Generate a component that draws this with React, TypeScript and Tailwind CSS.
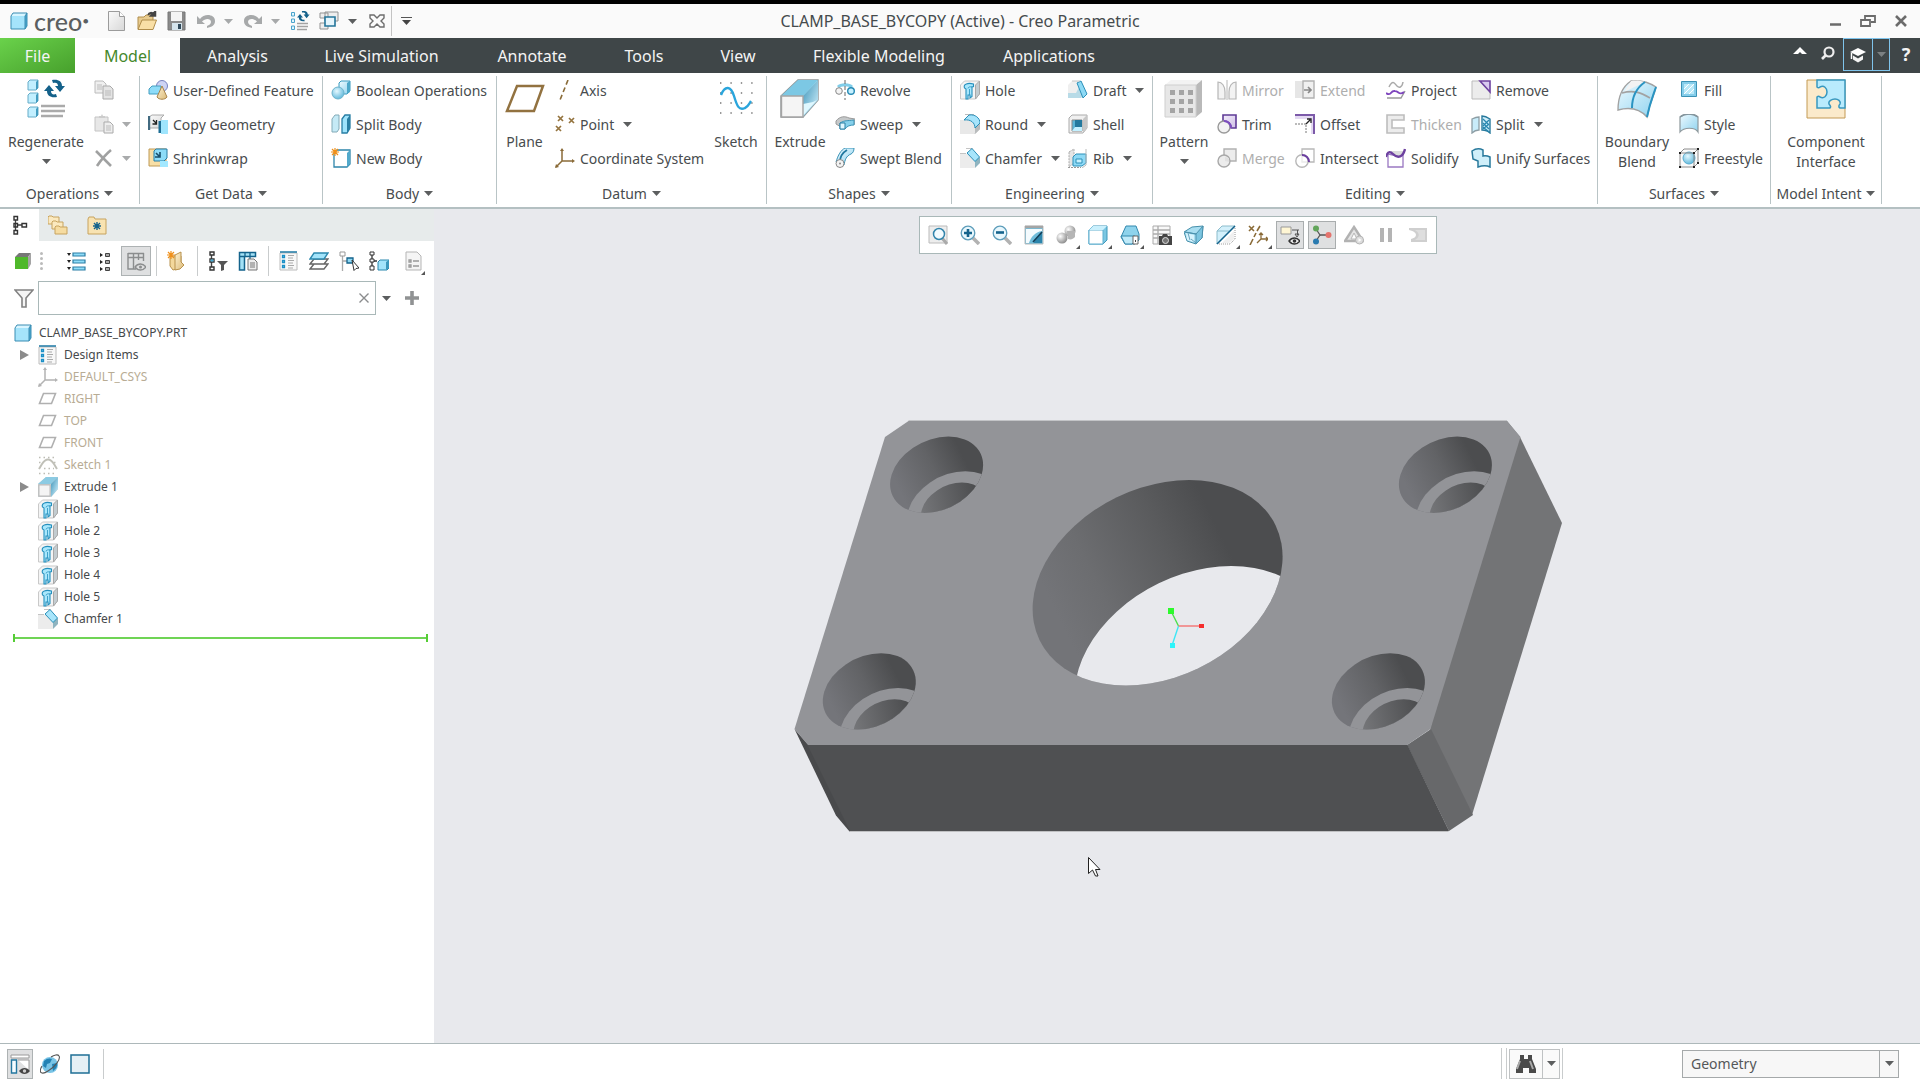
import type { ReactNode } from "react";
import { clsx } from "clsx";

interface IconProps {
    children: ReactNode;
    size?: 18 | 20 | 40;
}

function Ico({ children, size = 20 }: IconProps) {
    return (
        <svg
            viewBox={`0 0 ${size} ${size}`}
            width={size}
            height={size}
            fill="none"
            className="shrink-0"
            aria-hidden="true"
        >
            {children}
        </svg>
    );
}

function Caret({ className = "text-[#5c5e5f]" }: { className?: string }) {
    return (
        <svg viewBox="0 0 9 5" width="9" height="5" className={clsx("shrink-0", className)} aria-hidden="true">
            <path d="M0 0h9L4.500 5z" fill="currentColor" />
        </svg>
    );
}

// shared paints for all icons
function Paints() {
    return (
        <svg width="0" height="0" className="absolute" aria-hidden="true">
            <defs>
                <linearGradient id="sky" x1="0" y1="0" x2="1" y2="1">
                    <stop offset="0" stopColor="#eefaff" />
                    <stop offset="1" stopColor="#8fd3ef" />
                </linearGradient>
                <linearGradient id="sea" x1="0" y1="0" x2="1" y2="1">
                    <stop offset="0" stopColor="#3b93b8" />
                    <stop offset="1" stopColor="#d8f4ff" />
                </linearGradient>
                <linearGradient id="ash" x1="0" y1="0" x2="1" y2="1">
                    <stop offset="0" stopColor="#fafafa" />
                    <stop offset="1" stopColor="#d8d8d8" />
                </linearGradient>
                <linearGradient id="sand" x1="0" y1="0" x2="1" y2="1">
                    <stop offset="0" stopColor="#fdf0d0" />
                    <stop offset="1" stopColor="#dcbb79" />
                </linearGradient>
                <linearGradient id="lilac" x1="0" y1="0" x2="1" y2="1">
                    <stop offset="0" stopColor="#f3ecfb" />
                    <stop offset="1" stopColor="#cfc0e6" />
                </linearGradient>
                <radialGradient id="ball" cx="0.35" cy="0.35" r="0.7">
                    <stop offset="0" stopColor="#ffffff" />
                    <stop offset="1" stopColor="#8a8a8a" />
                </radialGradient>
                <radialGradient id="bluball" cx="0.4" cy="0.35" r="0.7">
                    <stop offset="0" stopColor="#e4f8ff" />
                    <stop offset="1" stopColor="#5bb6da" />
                </radialGradient>
            </defs>
        </svg>
    );
}

const SPARK = "M4 0v8M0 4h8M1 1l6 6M7 1L1 7";

function Part() {
    return (
        <Ico size={18}>
            <path d="M1 4l2-3h14l-2 3z" fill="#d9f5ff" />
            <path d="M15 4l2-3v13l-2 3z" fill="#4ba7cd" />
            <path d="M1 4h14v13H1z" fill="#a5e4fb" />
            <path d="M1 4l2-3h14v13l-2 3H1zM15 4v13M15 4l2-3" stroke="#3a8db3" />
        </Ico>
    );
}

function Refresh({ x = 0, y = 0, s = 1 }: { x?: number; y?: number; s?: number }) {
    return (
        <g transform={`translate(${x} ${y}) scale(${s})`} fill="#14618a">
            <path d="M8 0l1 3c3-1 5 0 5 3h-3l5 6 5-6h-3c0-5-4-7-10-6z" />
            <path d="M13 17l-1-3c-3 1-5 0-5-3h3L5 5l-5 6h3c0 5 4 7 10 6z" />
        </g>
    );
}

const icons: Record<string, ReactNode> = {
    newFile: <><path d="M1.500 .5h11l5 5v14h-16z" fill="url(#ash)" stroke="#9b9b9b" /><path d="M12.500 .5v5h5" fill="#fff" stroke="#9b9b9b" /></>,
    open: <><path d="M1 18V6h6l2-2h7v5" fill="#e8cb8e" stroke="#b08d4b" /><path d="M1 18.500L5 9h14.500L16 18.500z" fill="#f9dfa6" stroke="#b08d4b" /><path d="M11 4c1-3 4-3 6-1M18.500 0v5h-5z" stroke="#444" strokeWidth="1.500" fill="#444" /></>,
    save: <><path d="M1 1h17v18H1z" fill="#8a8a8a" stroke="#777" /><path d="M4 1h11v9H4z" fill="#f4f4f4" /><path d="M5 12h10v7H5z" fill="#d5e4ec" /><path d="M11 13h3v5h-3z" fill="#30495a" /></>,
    undo: <path d="M1 5v8h8L6 10.500C9 7 15 7 15 11c0 2-2 3-4 4v2c5-1 8-3 8-7 0-7-11-8-15-2z" fill="#a7a9aa" />,
    redo: <path d="M19 5v8h-8l3-2.500C11 7 5 7 5 11c0 2 2 3 4 4v2c-5-1-8-3-8-7 0-7 11-8 15-2z" fill="#a7a9aa" />,
    regenSmall: <><path d="M1.500 1.500h3V5h-3zM1.500 8h3v3.500h-3zM1.500 15h3v3.500h-3z" fill="#dff5ff" stroke="#4aa3cb" /><path d="M7 12.500h11M7 15.500h11M7 18.500h10" stroke="#a2a2a2" strokeWidth="1.400" /><Refresh x={7} y={0} s={0.6} /></>,
    windows: <><path d="M6 1h13v9H6zM1 2h8v5H1zM1 12h8v6H1z" fill="#eee" stroke="#929292" /><path d="M6 6h10v9H6z" fill="#e5f5fc" stroke="#24759a" strokeWidth="1.600" /></>,
    closeX: <path d="M3 4h4l3 3 3-3h4v3l-3 3 3 3v3h-4l-3-3-3 3H3v-3l3-3-3-3z" stroke="#6d6d6d" strokeWidth="1.400" />,
    copy: <><path d="M1 1h8l3 3v9H1z" fill="#efefef" stroke="#bcbcbc" /><path d="M9 6h7l3 3v10H9z" fill="#e4e4e4" stroke="#aaa" /><path d="M3 5h5M3 7h5M3 9h5M11 11h6M11 13h6M11 15h6" stroke="#bbb" /></>,
    paste: <><path d="M1 3h13v14H1z" fill="#e7e7e7" stroke="#c4c4c4" /><path d="M5 4V2h2l1-2 1 2h2v2z" fill="#ccc" /><path d="M10 8h6l3 3v8h-9z" fill="#eee" stroke="#aaa" /><path d="M12 12h5M12 14h5M12 16h5" stroke="#bbb" /></>,
    del: <path d="M2 3l15 15M17 2C11 7 7 12 3 18" stroke="#a0a1a1" strokeWidth="2.600" />,
    udf: <><circle cx="14" cy="6" r="5.500" fill="#cdd3f4" stroke="#7781be" /><path d="M1 9l3-3h9v8H1z" fill="#8edcf8" stroke="#459ec0" /><path d="M14 6l5 11c-2 3-8 3-10 0z" fill="url(#sand)" stroke="#a98348" /></>,
    copyGeo: <><path d="M1 3l3-2h12l-3 3v10H1z" fill="url(#ash)" stroke="#aaa" /><path d="M1 2v14" stroke="#426a80" strokeWidth="2.400" /><path d="M5 6l3 3M8.500 6v4h-4" stroke="#222" strokeWidth="1.300" /><path d="M12 7v12" stroke="#1d6d94" strokeWidth="3" /><path d="M13 6h7v14h-7z" fill="#9fe5fd" /></>,
    shrink: <><path d="M1 1h17v17H1z" fill="#f8dfa6" stroke="#be9a57" /><path d="M6 3l2-2h11v9l-3 3H6z" fill="#8ddcf8" stroke="#287da3" /><path d="M8 5l3 3M12 4v5H7" stroke="#174d68" strokeWidth="1.600" /><path d="M12 13h8v6h-8z" fill="#a3e8ff" /></>,
    boolean: <><path d="M8 3l2-2h9v10l-3 3H8z" fill="url(#sky)" stroke="#389abf" /><path d="M16 3l3-2v11l-3 2z" fill="#4ca7c8" /><circle cx="7" cy="13" r="6" fill="url(#bluball)" stroke="#6db3cc" /></>,
    splitBody: <><path d="M1 5l3-4h4v14l-2 3H1z" fill="#c5eaf6" stroke="#83aab7" /><path d="M11 5l3-4h5v13l-3 5h-5z" fill="#9fe3fb" stroke="#287ea4" strokeWidth="1.300" /><path d="M16 5l3-4v13l-3 5z" fill="#2b7fa3" /></>,
    newBody: <><path d="M3 5l3-3h13v14l-3 3H3z" fill="#fff" stroke="#2e85aa" strokeWidth="1.300" /><path d="M16 5l3-3v14l-3 3z" fill="#52a9cb" /><path d={SPARK} stroke="#f0901a" strokeWidth="1.200" /></>,
    axis: <path d="M13 0L5 20" stroke="#8a6b38" strokeWidth="1.600" strokeDasharray="5 3" />,
    point: <path d="M3 2l5 5M8 2L3 7M14 4l5 5M19 4l-5 5M1 12l5 5M6 12l-5 5" stroke="#94743f" strokeWidth="1.700" />,
    csys: <><path d="M7 2v11h11M7 13l-6 6" stroke="#8a6b38" strokeWidth="1.500" /><path d="M7 0l2 3H5zM20 13l-3 2v-4zM0 20l1-4 3 3z" fill="#8a6b38" /></>,
    revolve: <><path d="M3 7c3-3 11-3 14 0" stroke="#80cde9" strokeWidth="3" /><circle cx="4" cy="11" r="3.300" fill="#f3f3f3" stroke="#888" /><circle cx="16" cy="11" r="3.300" fill="#c6f0ff" stroke="#258ab5" strokeWidth="1.400" /><path d="M10 0v20" stroke="#666" strokeDasharray="4 2" /></>,
    sweep: <><path d="M1 7c4-5 9-5 13-3l6 1v5l-7 1c-4-2-6-1-7 2L1 10z" fill="#c5c8c9" stroke="#999" /><path d="M5 9c5-3 7-2 14-3v5c-4 0-7 1-9 4H5z" fill="#86d0eb" stroke="#3d94b7" /><path d="M5 9h5v6H5z" fill="#e0f7ff" stroke="#2a7fa4" /></>,
    swept: <><path d="M1 14C3 7 6 2 10 0h9c0 3-1 5-3 6-5 2-6 6-7 11z" fill="url(#sky)" stroke="#3b93b7" /><path d="M12 2c-5 3-7 8-7 12" stroke="#20789f" strokeWidth="1.800" /><circle cx="5" cy="15.500" r="4" fill="#f4f4f4" stroke="#888" /><circle cx="5" cy="15.500" r="1" fill="#888" /></>,
    hole: <><path d="M.5 5l4-4h15v13l-4 5H.5z" fill="#f4f4f4" stroke="#c9c9c9" /><path d="M15.500 5l4-4v13l-4 5z" fill="#c3ccd0" stroke="#a9a9a9" /><path d="M4.500 8C3 4 8 2.500 13.500 4v2.500l-1.500.5v9.500l-2 1.500v-3H8V19H6V9z" fill="#a9e7fc" stroke="#2590be" strokeWidth="1.100" /><path d="M8 8.500c0-1.500 2-2 4-1.500M9.500 9v6" stroke="#2590be" strokeWidth=".8" /></>,
    round: <><path d="M0 6h10l5 5v9H0z" fill="#e8e8e8" /><path d="M5 .5h9M15 19.500l5-5v-5" stroke="#bbb" /><path d="M15 20v-9l5-2v6z" fill="#b9bcbd" /><path d="M4 6l5-5c6-1 11 3 11 8l-5 5c0-5-4-9-11-8z" fill="#a7e4fb" stroke="#2b8fb8" /></>,
    chamfer: <><path d="M0 6h8l7 6v8H0z" fill="#ececec" /><path d="M15 20v-8l5-3v6z" fill="#8fb4c0" /><path d="M6 .5h7M0 5.500h6" stroke="#c4c4c4" /><path d="M7 5l5-4.500L19.500 9 15 13.500z" fill="#a7e5fb" stroke="#2b8fb8" /></>,
    draft: <><path d="M0 5l4-4h6v15H0z" fill="#efefef" /><path d="M0 13h8L12 5l5 9-4 4H0z" fill="#b8dbe7" /><path d="M9 3l4-2 6 13-4 4z" fill="#8edaf5" stroke="#2b8fb8" /><path d="M4 1h8" stroke="#c5c5c5" /></>,
    shell: <><path d="M1 4l3-3h15v13l-4 5H1z" fill="#f0f0f0" stroke="#aaa" /><path d="M15 5l4-4v13l-4 5z" fill="#c7c7c7" /><path d="M4 6h10v11H4z" fill="#58b4d6" stroke="#888" /><path d="M7 6h7v7H7z" fill="#23799e" /><path d="M4 17l3-4h7v4z" fill="#c2f0ff" /></>,
    rib: <><path d="M1 4l5-3v14l-5 4z" fill="#e5e5e5" stroke="#aaa" strokeDasharray="2 1" /><path d="M5 9l3-3h10v9l-4 3H5z" fill="#8ed9f5" stroke="#2b8fb8" /><path d="M18 1v16l-4 3" stroke="#bbb" /><path d="M8 11h6v4H8z" fill="#c9f2ff" stroke="#2b8fb8" /><path d="M0 19.500h13" stroke="#999" strokeDasharray="2 1" /></>,
    mirror: <><path d="M1 19V2c4 0 7 4 7 10v7z" fill="#f3f3f3" stroke="#b6b6b6" strokeWidth="1.200" /><path d="M19 19V2c-4 0-7 4-7 10v7z" fill="#f3f3f3" stroke="#b6b6b6" strokeWidth="1.200" /><path d="M10 0v20" stroke="#b6b6b6" /></>,
    trim: <><path d="M6 1h13v13h-5C14 9 11 7 6 7z" fill="url(#lilac)" stroke="#5f3b96" strokeWidth="1.600" /><circle cx="7" cy="13" r="6" fill="#eeeeee" fillOpacity=".7" stroke="#999" strokeWidth="1.400" /><path d="M7 7c4 0 7 3 7 7" stroke="#7e4fc0" strokeWidth="2" /></>,
    merge: <><path d="M7 1h12v12H7z" fill="#ececec" stroke="#b1b1b1" strokeWidth="1.400" /><circle cx="7" cy="13" r="6" fill="#ececec" stroke="#a8a8a8" strokeWidth="1.400" /><path d="M8 13V9l4 1v4z" fill="#e0e0e0" /></>,
    extend: <><path d="M0 1h8v17H0z" fill="#e6e6e6" /><path d="M8 1h11v17H8z" fill="#f0f0f0" stroke="#b1b1b1" strokeWidth="1.400" /><path d="M9 10h6M13 7l3 3-3 3" stroke="#888" strokeWidth="1.700" /></>,
    offset: <><path d="M0 1h19v19h-3V5H0z" fill="#e4daf2" /><path d="M0 1h19v19" stroke="#7c5aa9" strokeWidth="2" /><path d="M0 10h11v10" stroke="#777" strokeDasharray="2 1" /><path d="M11 10l4-4M12 5h4v4" stroke="#222" strokeWidth="1.300" /></>,
    intersect: <><path d="M7 1h12v13H7z" fill="#fff" stroke="#b8b8b8" strokeWidth="1.300" /><circle cx="7" cy="13" r="6.200" fill="#fff" fillOpacity=".7" stroke="#b8b8b8" strokeWidth="1.400" /><path d="M7 7c4 0 7 3 7 7" stroke="#6b3fa0" strokeWidth="2" /></>,
    project: <><path d="M3 7c4-8 6-3 8-1s5 2 6-4" stroke="#aaa" strokeWidth="1.500" /><path d="M1 18h14l4-7" stroke="#999" strokeWidth="1.400" /><path d="M0 13c6 4 4-3 9-2 4 0 4 5 9 1" stroke="#7e45bd" strokeWidth="2" /></>,
    thicken: <path d="M1 1h17v5H6v8h12v5H1z" fill="#ececec" stroke="#bdbdbd" strokeWidth="1.600" />,
    solidify: <><path d="M2 6v13h15V5c-4 5-9 2-15 1z" fill="#fff" stroke="#9a78c2" strokeWidth="1.300" /><path d="M4 3h13v3c-3 3-6 2-9 0z" fill="#dcdcdc" /><path d="M0 9c2-7 5-5 7-3 5 5 10 3 12-5" stroke="#6d419f" strokeWidth="2.400" /></>,
    remove: <><path d="M1 1h8l10 11v7H1z" fill="#ececec" stroke="#bbb" /><path d="M9 1h10v11z" fill="#d8c9ef" stroke="#6d419f" strokeWidth="1.600" /></>,
    split: <><path d="M1 5c2-1 4-2 7-2v13c-3 0-5 1-7 3z" fill="#c8ecfa" stroke="#8d9ea5" strokeWidth="1.300" /><path d="M11 2c3 0 5 1 8 3v14c-3-3-5-3-8-3z" fill="#cfeefa" stroke="#28799c" strokeWidth="1.400" /><path d="M12 5l6 6M12 9l6 6M12 13l6 5M18 6l-6 6M18 10l-6 5" stroke="#2b88b0" strokeWidth="1.300" /></>,
    unify: <path d="M1 3c3-2 7-3 11-1v6c3-1 5 0 7 1v10c-4-2-9-1-12 0v-6l-5-2z" fill="#cfeffa" stroke="#28799c" strokeWidth="1.500" />,
    fill: <><path d="M2.500 1.500h15v15h-15z" fill="#85cdea" stroke="#3b92b5" /><path d="M5 4h10v10H5z" fill="#b9e8f8" /><path d="M5 9l5-5M5 14L15 4M10 14l5-5" stroke="#fff" /></>,
    style: <><path d="M1 3c5-4 13-4 18 0v15c-3-5-14-5-18 0z" fill="url(#sky)" stroke="#8e989c" strokeWidth="1.200" /><path d="M1 3c5-4 13-4 18 0" stroke="#84959d" strokeWidth="1.500" /></>,
    freestyle: <><path d="M1 5l4-4h14v14l-4 4H1z" fill="#fafafa" stroke="#8c8c8c" /><circle cx="10" cy="10" r="6" fill="url(#bluball)" stroke="#58acd0" /><path d="M1 5h14v14M15 5l4-4" stroke="#888" /><path d="M0 4h2v2H0zM14 4h2v2h-2zM14 18h2v2h-2zM0 18h2v2H0zM18 0h2v2h-2zM18 14h2v2h-2z" fill="#222" /></>,

    // model tree toolbar
    greenCube: <><path d="M2 6l4-4h12l-3 4z" fill="#777" /><path d="M15 6l3-4v11l-3 5z" fill="#a4a4a4" /><path d="M2 6h13v12H2z" fill="#4fb82b" /></>,
    expand: <><path d="M7 2h12v3H7zM7 9h12v3H7zM7 16h12v3H7z" fill="#8fdcf8" stroke="#2d7ea5" strokeWidth="1.200" /><path d="M1 2h4L3 5zM1 9h4l-2 3zM1 16h4l-2 3z" fill="#222" /></>,
    collapse: <><path d="M9.500 2.500h4v3h-4zM9.500 9.500h4v3h-4zM9.500 16.500h4v3h-4z" fill="#aaa" stroke="#444" /><path d="M4 2l3 2-3 2zM4 9l3 2-3 2zM4 16l3 2-3 2z" fill="#222" /></>,
    columns: <><path d="M2 2.500h16M2 6.500h16M2 2v16h8M7.500 2v16M12.500 2v7M17.500 2v8" stroke="#8b8d8e" strokeWidth="1.400" /><path d="M9 16c3-4 8-4 11 0-3 4-8 4-11 0z" fill="#dededf" stroke="#8b8d8e" strokeWidth="1.300" /><circle cx="14.500" cy="16" r="1.500" fill="#8b8d8e" /></>,
    newGroup: <><path d="M3 5h11v12l-8 2-3-4z" fill="#f3d89c" stroke="#b8924e" /><path d="M8 4l6-3v10l3 3-4 4-5 1z" fill="url(#sand)" stroke="#b8924e" /><path d={SPARK} stroke="#f0901a" strokeWidth="1.200" /></>,
    treeFilter: <><path d="M3.500 4v15" stroke="#444" strokeWidth="1.400" /><path d="M2 1h4v3H2zM2 8h4v3H2zM2 16h4v3H2z" fill="#fff" stroke="#333" strokeWidth="1.400" /><path d="M2.500 8.500h3v2h-3z" fill="#43a9d2" /><path d="M9 10h11l-4 4v5l-3 1v-6z" fill="#555" /></>,
    treeCols: <><path d="M1.500 1.500h16v4h-16zM1.500 6v13h5V6" fill="#a3e1f6" stroke="#14638c" strokeWidth="1.500" /><path d="M7 1v5M12 1v7" stroke="#14638c" strokeWidth="1.300" /><path d="M10 8h6l3 3v8h-9z" fill="#eee" stroke="#777" /><path d="M12 12h5M12 14h5M12 16h5" stroke="#777" /></>,
    design: <><path d="M1 2h17v17H1z" fill="#f8f8f8" stroke="#bcbcbc" /><path d="M1 1h17" stroke="#1c78a4" strokeWidth="1.500" /><path d="M3.500 4.500h2v2h-2zM3.500 9.500h2v2h-2zM3.500 14.500h2v2h-2z" fill="#9edaf0" stroke="#1b8fc6" strokeWidth="1.300" /><path d="M9 4.500h6M9 7h5M9 9.500h6M9 12h5M9 14.500h6M9 17h5" stroke="#aaa" /></>,
    layers: <><path d="M1 18l4-5h14l-4 5zM1 13l4-5h14l-4 5z" fill="#fff" stroke="#666" strokeWidth="1.400" /><path d="M1 8l4-6h14l-4 6z" fill="#a3e4fb" stroke="#2b88ae" strokeWidth="1.400" /></>,
    treeSelect: <><path d="M3.500 4v16M4 10h6" stroke="#aaa" strokeWidth="1.300" /><path d="M1 1h5v4H1z" fill="#fff" stroke="#999" /><path d="M8 7h6v5H8z" fill="#8fd8f3" stroke="#14638c" strokeWidth="1.300" /><path d="M13 9l7 8-3 .5-2 2z" fill="#fff" stroke="#333" /></>,
    treePart: <><path d="M3 4v12M3 10h5" stroke="#333" strokeWidth="1.300" /><path d="M1 1h4v3H1zM1 8h4v3H1zM1 15h4v4H1z" fill="#fff" stroke="#333" /><path d="M9 11l2-2h9v8l-2 2H9z" fill="#a3e4fb" stroke="#2b88ae" /><path d="M17 11l3-2v8l-3 2z" fill="#3b98bd" /></>,
    listDoc: <><path d="M2 1h11l4 4v14H2z" fill="#f5f5f5" stroke="#b5b5b5" /><path d="M5 9h2v2H5zM5 14h2v2H5zM9 10h6M9 15h6" stroke="#999" strokeWidth="1.300" /></>,
    treeTab: <><path d="M5.500 5v10M8 10h4" stroke="#444" strokeWidth="1.300" /><path d="M4 1.500h3.500V5H4zM4 8.500h3.500V12H4zM4 15.500h3.500V19H4zM12 8.500h4.500V12H12z" stroke="#333" strokeWidth="1.400" /></>,
    folders: <><path d="M0 2l1-1h3l1 1h6v7H0z" fill="#fbe9bf" stroke="#c7a35f" /><path d="M4 7l1-1h3l1 1h6v7H4z" fill="#fbe9bf" stroke="#c7a35f" /><path d="M7 12l1-1h3l1 1h7v7H7z" fill="#f6dca1" stroke="#c7a35f" /></>,
    favorites: <><path d="M1 4l1-2h5l1 2h11v15H1z" fill="#f8e3b2" stroke="#c7a35f" /><path d="M10 7v8M6 11h8M7 8l6 6M13 8l-6 6" stroke="#14638c" strokeWidth="1.400" /></>,
    funnel: <path d="M1 2h18l-7 8v9H8v-9z" fill="#f5f5f5" stroke="#828282" strokeWidth="1.600" />,

    // graphics toolbar
    refit: <><path d="M1 1h18v17H1z" fill="#ededed" stroke="#bbb" /><path d="M14 13l5 6" stroke="#aaa" strokeWidth="3" /><circle cx="11" cy="9" r="5.500" fill="#f3fbff" stroke="#3385ac" strokeWidth="1.500" /></>,
    zoomIn: <><path d="M13 13l6 6" stroke="#b2b2b2" strokeWidth="3.500" /><circle cx="8" cy="8" r="6.800" fill="#e8f7fd" stroke="#5d9dba" strokeWidth="1.300" /><path d="M8 4v8M4 8h8" stroke="#14638c" strokeWidth="2.600" /></>,
    zoomOut: <><path d="M13 13l6 6" stroke="#b2b2b2" strokeWidth="3.500" /><circle cx="8" cy="8" r="6.800" fill="#e8f7fd" stroke="#5d9dba" strokeWidth="1.300" /><path d="M4 7.500h8" stroke="#14638c" strokeWidth="2.600" /></>,
    repaint: <><path d="M1 1h18v18H1z" fill="#6fbddb" stroke="#bbb" /><path d="M2 4h16v2C11 7 7 12 5 18H2z" fill="#f4fbfe" /><path d="M1 2h18" stroke="#a5a5a5" strokeWidth="2.500" /><path d="M10 17L18 7v11h-8z" fill="#2d85ac" /><path d="M9 17L18 7" stroke="#123e57" strokeWidth="1.600" /></>,
    shading: <><circle cx="14" cy="6" r="5.500" fill="url(#ball)" /><path d="M11 6h8v6c-2 2-4 3-7 2z" fill="#b5b5b5" /><circle cx="6" cy="13" r="5.500" fill="url(#ball)" /></>,
    display: <><path d="M1 5l4-4h14v14l-4 4H1z" fill="#7bc7e2" stroke="#3f97ba" /><path d="M1 5h14v14H1z" fill="#fff" stroke="#5fb0d0" /><path d="M1 5l4-4h14l-4 4z" fill="#c9f0fd" /></>,
    savedViews: <><path d="M6 1h10l3 8v6l-4 4H5l-4-7z" fill="#8ed3ec" stroke="#3388ad" /><path d="M1 11h14v5l-3 3H5z" fill="#bfeaf9" stroke="#3388ad" /><path d="M13 11h5v8h-5z" fill="#fff" stroke="#666" /><path d="M15 15h1v2h-1z" fill="#444" /></>,
    viewManager: <><path d="M1 1h17v18H1z" fill="#f8f8f8" stroke="#aaa" /><path d="M1 5h17M1 9h17M1 13h8M6 1v18" stroke="#aaa" strokeWidth="1.300" /><path d="M7 11h3l1-2h4l1 2h4v9H7z" fill="#444" /><circle cx="13.500" cy="15.500" r="3" fill="#777" stroke="#ddd" /></>,
    perspective: <><path d="M0 7l8-5 11-1-1 12-6 6-9-3z" fill="#a9def1" stroke="#468faa" /><path d="M1 7l11 2v10l6-6 1-12-7 8z" fill="#7cc5e0" stroke="#4b91ad" /><path d="M2 8l8 2v7l-7-2z" fill="#d8f3fd" /><path d="M7 14l5 4M4 8l2 7" stroke="#4b91ad" strokeWidth=".8" /></>,
    section: <><path d="M1 6l5-5h13L1 19z" fill="#d3f0fb" stroke="#8cbccc" /><path d="M1 6h12" stroke="#8cbccc" /><path d="M19 3v11l-5 5H3" stroke="#999" strokeDasharray="1 1" /><path d="M6 18L18 6v8l-5 4z" fill="#f0f0f0" /><path d="M1 19L19 1" stroke="#14638c" strokeWidth="1.600" /></>,
    datumDisplay: <><path d="M1 1l5 5M6 1L1 6M12 1L9 6M8 8l-2 4M5 14l-3 6" stroke="#8a6b38" strokeWidth="1.600" /><path d="M13 8v6h7M13 14l-4 4M11 10l2-2 2 2M18 12l2 2-2 2" stroke="#8a6b38" strokeWidth="1.300" /></>,
    annotation: <><path d="M1 2h10v7H1z" fill="#fff6d4" stroke="#999" /><path d="M12 5h7M17.500 5v5M15 9h4l-2 3z" stroke="#555" /><path d="M9 16c3-4 8-4 11 0-3 4-8 4-11 0z" fill="#eee" stroke="#333" strokeWidth="1.400" /><circle cx="14.500" cy="16" r="1.800" fill="#333" /></>,
    spin: <><path d="M8 10L4 4M8 10h9M8 10l-4 6" stroke="#555" strokeWidth="1.300" /><circle cx="4" cy="3.500" r="3" fill="#62a55a" /><circle cx="16.500" cy="10" r="3" fill="#e4736d" /><circle cx="4" cy="16.500" r="3" fill="#2a7bb0" /></>,
    simulate: <><path d="M10 2l9 14H1z" fill="#e5e5e5" stroke="#b2b2b2" strokeWidth="2.400" /><path d="M10 8l3 6H7z" fill="#fff" stroke="#b8b8b8" /><circle cx="15.500" cy="15" r="4" fill="#ddd" stroke="#b5b5b5" /><path d="M14.500 13l3 2-3 2z" fill="#fff" /></>,
    pause: <path d="M4 3h4v14H4zM12 3h4v14h-4z" fill="#b4b4b4" />,
    results: <><path d="M1 3h18v14H3v-3c3-1 5-2 5-4S6 6 1 5z" fill="#cfcfcf" /><path d="M7 5c5 3 5 7 0 10h10V5z" fill="#dedede" /></>,

    // status bar
    navToggle: <><path d="M1 1h18v3H1zM8 6h11v10" fill="#fff" stroke="#9a9a9a" /><path d="M1.500 6h5v13h-5z" fill="#f5fcff" stroke="#2377a0" strokeWidth="1.400" /><path d="M9 17c3-4 8-4 11 0-3 4-8 4-11 0z" fill="#444" /><circle cx="14.500" cy="17" r="1.700" fill="#ccc" /></>,
    globe: <><circle cx="10" cy="11" r="8" fill="#79c4e6" /><path d="M4 7c3-3 6-3 8-2l-2 4-3 1-1 4-3-2zM12 10l5-1c1 3-1 6-4 8z" fill="#2482b4" /><path d="M2 12c-4 7 0 9 6 5 7-4 13-12 11-15-1-2-5-1-8 1" stroke="#555" strokeWidth="1.100" /></>,
    square: <path d="M1 1h18v18H1z" fill="#e6f0f5" stroke="#1f6f95" strokeWidth="1.500" />,
    binoculars: <><path d="M4 1h4v4h4V1h4v4l4 10v4h-7v-5H7v5H0v-4L4 5z" fill="#4a4a4a" /><path d="M4 7L1 15M14 7l3 8" stroke="#aaa" strokeWidth="2" /></>,
};

const treeIcons: Record<string, ReactNode> = {
    csys: <><path d="M7 2v11h11M7 13l-6 6" stroke="#b3b3b3" strokeWidth="1.500" /><path d="M7 0l2 3H5zM20 13l-3 2v-4zM0 20l1-4 3 3z" fill="#b3b3b3" /></>,
    plane: <path d="M5.500 4.500h12l-4 10h-12z" stroke="#b0b0b0" strokeWidth="1.600" />,
    sketch: <><path d="M1 2.500h18M1 7.500h3M16 7.500h3M6 13.500h10M1 18.500h18" stroke="#bdbdb5" strokeWidth="1.500" strokeDasharray="1.500 3" /><path d="M1 14l3-5c4-6 8-6 12 0l3 5" stroke="#c0c0b8" strokeWidth="2" /></>,
    extrude: <><path d="M0 7l8-7h12v12l-7 8H0z" fill="#c5c9ca" /><path d="M0 7l8-7h12l-7 7z" fill="#8ccbe3" /><path d="M13 7l7-7v12l-7 8z" fill="url(#sea)" /><path d="M1 8h11v11H1z" fill="#f4f4f4" stroke="#bbb" /></>,
};

const bigIcons: Record<string, ReactNode> = {
    regenerate: <><path d="M2 3l2-2h8v8l-2 2H2zM2 16l2-2h8v8l-2 2H2zM2 30l2-2h8v8l-2 2H2z" fill="#c2efff" stroke="#66acc8" /><path d="M10 3l2-2v8l-2 2zM10 16l2-2v8l-2 2zM10 30l2-2v8l-2 2z" fill="#429cc0" /><path d="M15 27h24M15 32h24M15 37h22" stroke="#aaa" strokeWidth="2.500" /><Refresh x={18} y={1} /></>,
    plane: <path d="M12 7h26l-9 25H2z" stroke="#927240" strokeWidth="2.500" />,
    sketch: <><path d="M4 4h34M4 14h34M4 24h34M4 34h34" stroke="#777" strokeWidth="1.400" strokeDasharray="1.400 9" /><path d="M5 16C9 6 15 7 18 17s5 15 11 12c3-1 4-4 6-7" stroke="#2aa5dc" strokeWidth="2.400" /></>,
    extrude: <><path d="M1 17L18 1h20v20L23 38H1z" fill="#c2eefd" stroke="#909596" strokeWidth="1.400" /><path d="M1 17L18 1h20L23 17z" fill="#7cc8e4" /><path d="M23 17L38 1v20L23 38z" fill="url(#sea)" /><path d="M23 25l10-2 4-2-14 16z" fill="#dff8ff" /><path d="M1.500 17H23v21H1.500z" fill="#f5f5f5" stroke="#a4a4a4" strokeWidth="1.400" /></>,
    pattern: <><path d="M1 6l6-5h31l-6 5z" fill="#f3f3f3" /><path d="M32 6l6-5v32l-6 5z" fill="#b9b9b9" /><path d="M1 6h31v32H1z" fill="#e7e7e7" stroke="#cfcfcf" /><path d="M6 11h5v5H6zM15 11h5v5h-5zM24 11h5v5h-5zM6 20h5v5H6zM15 20h5v5h-5zM24 20h5v5h-5zM6 29h5v5H6zM15 29h5v5h-5zM24 29h5v5h-5z" fill="#a4a4a4" /></>,
    boundary: <><path d="M14 2c8-1 16 0 25 6-2 9-6 14-9 30C22 29 12 28 1 31 1 19 5 8 14 2z" fill="url(#sky)" stroke="#a2a2a2" strokeWidth="1.400" /><path d="M14 2c5-1 10 0 14 1L7 13z" fill="#f3f3f3" /><path d="M5 14c11-3 18-1 28 5" stroke="#a2a2a2" strokeWidth="1.600" /><path d="M28 3C18 10 15 19 15 29M39 8c-3 9-6 15-9 30" stroke="#2a94c2" strokeWidth="2" /></>,
    component: <><path d="M1 1h38v38H1z" fill="#fbeacb" stroke="#c39a54" /><path d="M11 1h28v28h-5c-2-1-1-3 0-4 1-3-2-5-5-5s-7 2-6 5c1 1 2 3 1 4H11V18c1-1 2-1 3 0 4 2 7-1 7-5s-3-7-7-5c-1 1-2 1-3 0z" fill="#b9ebfd" stroke="#3798c0" strokeWidth="1.500" /></>,
};

interface Cmd {
    icon: string;
    label: string;
    more?: boolean;
    off?: boolean;
}

function Column({ items, className }: { items: Cmd[]; className?: string }) {
    return (
        <div className={clsx("flex shrink-0 flex-col", className)}>
            {items.map((c) => (
                <button
                    key={c.label}
                    type="button"
                    disabled={c.off}
                    className={clsx("flex h-[34px] items-center gap-[5px] whitespace-nowrap", c.off && "text-[#aeaeae]")}
                >
                    <Ico>{icons[c.icon]}</Ico>
                    {c.label}
                    {c.more && <span className="ml-1"><Caret /></span>}
                </button>
            ))}
        </div>
    );
}

function BigButton({ icon, lines, more, className }: { icon: string; lines: string[]; more?: boolean; className: string }) {
    return (
        <button type="button" className={clsx("flex shrink-0 flex-col items-center self-start pt-[6px]", className)}>
            <Ico size={40}>{bigIcons[icon]}</Ico>
            <span className="mt-[13px] flex flex-col whitespace-nowrap">
                {lines.map((l) => (
                    <span key={l} className="leading-5">{l}</span>
                ))}
            </span>
            {more && <span className="mt-[7px]"><Caret /></span>}
        </button>
    );
}

function Group({ title, className, children }: { title: string; className: string; children: ReactNode }) {
    return (
        <section className={clsx("flex shrink-0 flex-col", className)}>
            <div className="flex h-[106px]">{children}</div>
            <button type="button" className="flex h-7 items-center justify-center gap-[5px] whitespace-nowrap">
                {title}
                <Caret />
            </button>
        </section>
    );
}

function Divider() {
    return <div className="my-[3px] w-px shrink-0 bg-[#b9c4c6]" />;
}

function TitleBar() {
    return (
        <header className="grid h-[34px] shrink-0 grid-cols-[1fr_auto_1fr] items-center bg-[#fafafa] text-[16px] text-[#454b4d]">
            <div className="flex items-center pl-[10px]">
                <Part />
                <span className="ml-[6px] w-[73px] font-['Lato'] text-[25px] leading-[26px] font-medium text-[#5b5f61]">
                    creo<sup className="text-[12px]">•</sup>
                </span>
                <div className="flex items-center gap-[10px]">
                    <button type="button" aria-label="New"><Ico>{icons.newFile}</Ico></button>
                    <button type="button" aria-label="Open"><Ico>{icons.open}</Ico></button>
                    <button type="button" aria-label="Save"><Ico>{icons.save}</Ico></button>
                </div>
                <div className="ml-[9px] flex items-center gap-2">
                    <button type="button" aria-label="Undo"><Ico>{icons.undo}</Ico></button>
                    <Caret className="text-[#a7a9aa]" />
                </div>
                <div className="ml-[10px] flex items-center gap-2">
                    <button type="button" aria-label="Redo"><Ico>{icons.redo}</Ico></button>
                    <Caret className="text-[#a7a9aa]" />
                </div>
                <button type="button" aria-label="Regenerate" className="ml-[10px]"><Ico>{icons.regenSmall}</Ico></button>
                <button type="button" aria-label="Windows" className="ml-[9px] flex items-center gap-[9px]">
                    <Ico>{icons.windows}</Ico>
                    <Caret />
                </button>
                <button type="button" aria-label="Close window" className="ml-[10px]"><Ico>{icons.closeX}</Ico></button>
                <div className="ml-1 h-[30px] w-px bg-[#c3c3c3]" />
                <button type="button" aria-label="Customize" className="ml-[9px] flex flex-col items-center gap-[2px]">
                    <span className="h-px w-[11px] bg-[#555]" />
                    <Caret className="text-[#444]" />
                </button>
            </div>
            <h1>CLAMP_BASE_BYCOPY (Active) - Creo Parametric</h1>
            <div className="flex justify-end gap-[13px] pr-[9px]">
                <button type="button" aria-label="Minimize">
                    <Ico><path d="M5 13.500h11" stroke="#6b6b6b" strokeWidth="2.500" /></Ico>
                </button>
                <button type="button" aria-label="Restore">
                    <Ico><path d="M7 8V5h10v6h-4M3 9h9v6H3z" stroke="#6b6b6b" strokeWidth="1.800" /></Ico>
                </button>
                <button type="button" aria-label="Close">
                    <Ico><path d="M5 5l10 10M15 5L5 15" stroke="#6b6b6b" strokeWidth="2.600" /></Ico>
                </button>
            </div>
        </header>
    );
}

const tabs = [
    { label: "Analysis", width: "w-[115px]" },
    { label: "Live Simulation", width: "w-[173px]" },
    { label: "Annotate", width: "w-[128px]" },
    { label: "Tools", width: "w-[96px]" },
    { label: "View", width: "w-[92px]" },
    { label: "Flexible Modeling", width: "w-[190px]" },
    { label: "Applications", width: "w-[150px]" },
];

function TabBar() {
    return (
        <nav className="flex h-[35px] shrink-0 bg-[#3f4648] text-[16px] text-[#f4f4f4]">
            <button type="button" className="w-[75px] bg-linear-to-br from-[#6ad24b] to-[#47a02c]">File</button>
            <button type="button" className="w-[105px] bg-white text-[#45882c]">Model</button>
            {tabs.map((t) => (
                <button key={t.label} type="button" className={t.width}>{t.label}</button>
            ))}
            <div className="ml-auto flex items-start pr-1">
                <button type="button" aria-label="Minimize ribbon" className="mt-1 mr-2">
                    <Ico><path d="M3 12l7-7 7 7h-5l-2-2-2 2z" fill="#fff" /></Ico>
                </button>
                <button type="button" aria-label="Search" className="mt-1 mr-[5px] pt-[2px]">
                    <Ico><circle cx="11" cy="8" r="4.500" stroke="#eee" strokeWidth="2.200" /><path d="M8 11l-4 4" stroke="#eee" strokeWidth="2.600" /></Ico>
                </button>
                <button type="button" aria-label="Learning" className="flex h-[33px] w-[30px] items-center justify-center border border-[#7fc4ec]">
                    <Ico><path d="M10 3l8 4-8 4-8-4z" fill="#fff" /><path d="M5 10.500v4l5 3 5-3v-4l-5 3z" fill="#f4f4f4" /><path d="M3.500 8v6" stroke="#fff" strokeWidth="1.500" /></Ico>
                </button>
                <button type="button" aria-label="Learning options" className="flex h-[33px] w-[17px] items-center justify-center border border-l-0 border-[#7fc4ec]">
                    <Caret className="text-[#7b8082]" />
                </button>
                <button type="button" aria-label="Help" className="ml-[6px] h-[33px] w-5 text-[18px] font-bold">?</button>
            </div>
        </nav>
    );
}

function Ribbon() {
    return (
        <div className="flex h-[136px] shrink-0 overflow-hidden border-b-2 border-[#b4c0c2] bg-white text-[14px] text-[#484c4e]">
            <Group title="Operations" className="w-[139px]">
                <BigButton icon="regenerate" lines={["Regenerate"]} more className="w-[92px]" />
                <div className="flex flex-col pl-[2px]">
                    <button type="button" aria-label="Copy" className="flex h-[34px] items-center"><Ico>{icons.copy}</Ico></button>
                    <button type="button" aria-label="Paste" className="flex h-[34px] items-center gap-2"><Ico>{icons.paste}</Ico><Caret className="text-[#a9abac]" /></button>
                    <button type="button" aria-label="Delete" className="flex h-[34px] items-center gap-2"><Ico>{icons.del}</Ico><Caret className="text-[#a9abac]" /></button>
                </div>
            </Group>
            <Divider />
            <Group title="Get Data" className="w-[182px]">
                <Column className="pl-2" items={[{ icon: "udf", label: "User-Defined Feature" }, { icon: "copyGeo", label: "Copy Geometry" }, { icon: "shrink", label: "Shrinkwrap" }]} />
            </Group>
            <Divider />
            <Group title="Body" className="w-[173px]">
                <Column className="pl-2" items={[{ icon: "boolean", label: "Boolean Operations" }, { icon: "splitBody", label: "Split Body" }, { icon: "newBody", label: "New Body" }]} />
            </Group>
            <Divider />
            <Group title="Datum" className="w-[269px]">
                <BigButton icon="plane" lines={["Plane"]} className="w-[55px]" />
                <Column className="w-[158px] pl-[3px]" items={[{ icon: "axis", label: "Axis" }, { icon: "point", label: "Point", more: true }, { icon: "csys", label: "Coordinate System" }]} />
                <BigButton icon="sketch" lines={["Sketch"]} className="w-[52px]" />
            </Group>
            <Divider />
            <Group title="Shapes" className="w-[184px]">
                <BigButton icon="extrude" lines={["Extrude"]} className="w-[66px]" />
                <Column className="pl-[2px]" items={[{ icon: "revolve", label: "Revolve" }, { icon: "sweep", label: "Sweep", more: true }, { icon: "swept", label: "Swept Blend" }]} />
            </Group>
            <Divider />
            <Group title="Engineering" className="w-[200px]">
                <Column className="w-[116px] pl-2" items={[{ icon: "hole", label: "Hole" }, { icon: "round", label: "Round", more: true }, { icon: "chamfer", label: "Chamfer", more: true }]} />
                <Column items={[{ icon: "draft", label: "Draft", more: true }, { icon: "shell", label: "Shell" }, { icon: "rib", label: "Rib", more: true }]} />
            </Group>
            <Divider />
            <Group title="Editing" className="w-[444px]">
                <BigButton icon="pattern" lines={["Pattern"]} more className="w-[62px]" />
                <Column className="w-[80px] pl-[2px]" items={[{ icon: "mirror", label: "Mirror", off: true }, { icon: "trim", label: "Trim" }, { icon: "merge", label: "Merge", off: true }]} />
                <Column className="w-[91px]" items={[{ icon: "extend", label: "Extend", off: true }, { icon: "offset", label: "Offset" }, { icon: "intersect", label: "Intersect" }]} />
                <Column className="w-[85px]" items={[{ icon: "project", label: "Project" }, { icon: "thicken", label: "Thicken", off: true }, { icon: "solidify", label: "Solidify" }]} />
                <Column items={[{ icon: "remove", label: "Remove" }, { icon: "split", label: "Split", more: true }, { icon: "unify", label: "Unify Surfaces" }]} />
            </Group>
            <Divider />
            <Group title="Surfaces" className="w-[172px]">
                <BigButton icon="boundary" lines={["Boundary", "Blend"]} className="w-[78px]" />
                <Column className="pl-[3px]" items={[{ icon: "fill", label: "Fill" }, { icon: "style", label: "Style" }, { icon: "freestyle", label: "Freestyle" }]} />
            </Group>
            <Divider />
            <Group title="Model Intent" className="w-[110px]">
                <BigButton icon="component" lines={["Component", "Interface"]} className="w-full" />
            </Group>
            <Divider />
        </div>
    );
}

interface TreeItem {
    icon: ReactNode;
    label: string;
    open?: boolean;
    dim?: boolean;
}

const tree: TreeItem[] = [
    { icon: icons.design, label: "Design Items", open: true },
    { icon: treeIcons.csys, label: "DEFAULT_CSYS", dim: true },
    { icon: treeIcons.plane, label: "RIGHT", dim: true },
    { icon: treeIcons.plane, label: "TOP", dim: true },
    { icon: treeIcons.plane, label: "FRONT", dim: true },
    { icon: treeIcons.sketch, label: "Sketch 1", dim: true },
    { icon: treeIcons.extrude, label: "Extrude 1", open: true },
    { icon: icons.hole, label: "Hole 1" },
    { icon: icons.hole, label: "Hole 2" },
    { icon: icons.hole, label: "Hole 3" },
    { icon: icons.hole, label: "Hole 4" },
    { icon: icons.hole, label: "Hole 5" },
    { icon: icons.chamfer, label: "Chamfer 1" },
];

function ToolButton({ icon, label, active, className = "w-[30px]" }: { icon: string; label: string; active?: boolean; className?: string }) {
    return (
        <button
            type="button"
            aria-label={label}
            className={clsx("flex h-[30px] shrink-0 items-center justify-center", className, active && "border border-[#adb2b3] bg-[#dfe0e1]")}
        >
            <Ico>{icons[icon]}</Ico>
        </button>
    );
}

function SidePanel() {
    return (
        <aside className="flex w-[434px] shrink-0 flex-col bg-white text-[12px] text-[#46494b]">
            <div className="flex h-8 bg-[#e7ebeb]">
                <button type="button" aria-label="Model Tree" className="flex w-[39px] items-center justify-center bg-white"><Ico>{icons.treeTab}</Ico></button>
                <button type="button" aria-label="Folder Browser" className="flex w-[37px] items-center justify-center"><Ico>{icons.folders}</Ico></button>
                <button type="button" aria-label="Favorites" className="flex w-[42px] items-center justify-center"><Ico>{icons.favorites}</Ico></button>
            </div>
            <div className="flex h-10 items-center">
                <ToolButton icon="greenCube" label="Show" className="ml-2 w-[30px]" />
                <div className="flex w-[7px] flex-col items-center gap-[2px]">
                    <span className="size-[3px] rounded-full bg-[#bbb]" />
                    <span className="size-[3px] rounded-full bg-[#bbb]" />
                    <span className="size-[3px] rounded-full bg-[#bbb]" />
                    <span className="size-[3px] rounded-full bg-[#bbb]" />
                </div>
                <ToolButton icon="expand" label="Expand All" className="ml-[16px] w-[30px]" />
                <ToolButton icon="collapse" label="Collapse All" />
                <ToolButton icon="columns" label="Tree Columns" active />
                <div className="ml-[5px] h-[30px] w-px bg-[#c9cccd]" />
                <ToolButton icon="newGroup" label="New Group" className="ml-[5px] w-[30px]" />
                <div className="ml-[5px] h-[30px] w-px bg-[#c9cccd]" />
                <ToolButton icon="treeFilter" label="Tree Filters" className="ml-[5px] w-[30px]" />
                <ToolButton icon="treeCols" label="Column Setup" />
                <div className="ml-[5px] h-[30px] w-px bg-[#c9cccd]" />
                <ToolButton icon="design" label="Design Tree" className="ml-[5px] w-[30px]" />
                <ToolButton icon="layers" label="Layers" />
                <ToolButton icon="treeSelect" label="Select" />
                <ToolButton icon="treePart" label="Locate" />
                <ToolButton icon="listDoc" label="Detail" className="ml-[5px] w-[30px]" />
                <svg viewBox="0 0 4 4" width="4" height="4" className="-ml-2 mb-[6px] self-end" aria-hidden="true"><path d="M4 0v4H0z" fill="#555" /></svg>
            </div>
            <div className="flex h-[34px] items-center pl-[14px]">
                <Ico>{icons.funnel}</Ico>
                <div className="relative ml-1 h-full w-[338px]">
                    <input aria-label="Filter tree" className="h-full w-full border border-[#a9b8b8] bg-white pr-8 pl-2 text-[14px] outline-none" />
                    <button type="button" aria-label="Clear" className="absolute top-[7px] right-[2px]">
                        <Ico><path d="M5.500 5.500l9 9M14.500 5.500l-9 9" stroke="#8a8c8d" strokeWidth="1.400" /></Ico>
                    </button>
                </div>
                <button type="button" aria-label="Filter options" className="ml-[6px]"><Caret /></button>
                <button type="button" aria-label="Add filter" className="ml-[11px]">
                    <Ico><path d="M10 3v14M3 10h14" stroke="#909293" strokeWidth="3.600" /></Ico>
                </button>
            </div>
            <ul className="mt-[7px]">
                <li className="flex h-[22px] items-center gap-[7px] pl-[14px]">
                    <Part />
                    CLAMP_BASE_BYCOPY.PRT
                </li>
                {tree.map((item) => (
                    <li key={item.label} className={clsx("flex h-[22px] items-center pl-5", item.dim && "text-[#b8ac94]")}>
                        <span className="flex w-[18px]">
                            {item.open && (
                                <svg viewBox="0 0 10 10" width="10" height="10" aria-hidden="true"><path d="M0 0l9 5-9 5z" fill="#8b8b8b" /></svg>
                            )}
                        </span>
                        <Ico>{item.icon}</Ico>
                        <span className="ml-[6px]">{item.label}</span>
                    </li>
                ))}
            </ul>
            <div className="mt-1 mr-[6px] ml-[13px] flex h-2 items-center">
                <span className="h-2 w-[2px] bg-[#55cd35]" />
                <span className="h-[2px] flex-1 bg-[#6fd455]" />
                <span className="h-2 w-[2px] bg-[#55cd35]" />
            </div>
        </aside>
    );
}

const viewTools = [
    { icon: "refit", label: "Refit" },
    { icon: "zoomIn", label: "Zoom In" },
    { icon: "zoomOut", label: "Zoom Out" },
    { icon: "repaint", label: "Repaint" },
    { icon: "shading", label: "Rendering Options", menu: true },
    { icon: "display", label: "Display Style", menu: true },
    { icon: "savedViews", label: "Saved Orientations", menu: true },
    { icon: "viewManager", label: "View Manager" },
    { icon: "perspective", label: "Perspective View" },
    { icon: "section", label: "Sections", menu: true },
    { icon: "datumDisplay", label: "Datum Display Filters", menu: true },
    { icon: "annotation", label: "Annotation Display", active: true },
    { icon: "spin", label: "Spin Center", active: true },
    { icon: "simulate", label: "Simulate" },
    { icon: "pause", label: "Pause" },
    { icon: "results", label: "Results" },
];

// counterbored hole: a circle sheared onto the top face, with its ledge and drill below
function CounterBore({ id, x, y }: { id: string; x: number; y: number }) {
    return (
        <g transform={`translate(${x} ${y})`}>
            <clipPath id={id}>
                <circle r="1" transform="matrix(45 0 -11.800 38.200 0 0)" />
            </clipPath>
            <g clipPath={`url(#${id})`}>
                <rect x="-60" y="-50" width="120" height="100" fill="url(#boreWall)" />
                <circle r="1" transform="matrix(45 0 -11.800 38.200 17 34.700)" fill="#939498" />
                <circle r="1" transform="matrix(31.700 0 -8.300 26.900 17 34.700)" fill="url(#drillWall)" />
            </g>
        </g>
    );
}

function Model() {
    return (
        <svg viewBox="434 209 1486 834" className="h-full w-full" role="img" aria-label="Clamp base model">
            <defs>
                <linearGradient id="mainWall" gradientUnits="userSpaceOnUse" x1="1050" y1="600" x2="1228" y2="513">
                    <stop offset="0" stopColor="#737478" />
                    <stop offset="0.250" stopColor="#6c6d70" />
                    <stop offset="0.650" stopColor="#5a5b5d" />
                    <stop offset="0.920" stopColor="#4c4d4f" />
                </linearGradient>
                <linearGradient id="boreWall" gradientUnits="userSpaceOnUse" x1="-40" y1="10" x2="32" y2="-25">
                    <stop offset="0" stopColor="#74757a" />
                    <stop offset="0.500" stopColor="#626366" />
                    <stop offset="0.900" stopColor="#4c4d4f" />
                </linearGradient>
                <linearGradient id="drillWall" x1="0" y1="0.600" x2="0.900" y2="0.200">
                    <stop offset="0" stopColor="#76777a" />
                    <stop offset="0.900" stopColor="#4c4d4f" />
                </linearGradient>
                <clipPath id="mainHole">
                    <circle r="1" transform="matrix(120.900 0 -31.700 102.800 1157.600 582.800)" />
                </clipPath>
            </defs>
            <path d="M1507 421l13 16 42 86-90 292-42-86z" fill="#737476" />
            <path d="M1407 745l24-16 42 86-24 16z" fill="#67686a" />
            <path d="M794.500 729l14 16 43 86-2 .5-13.500-16z" fill="#494a4c" />
            <path d="M807 744h600l42 87H850z" fill="#4f5052" />
            <path d="M908.500 421H1507l13.500 16-90 292-23.500 16H808l-13.500-16L885 437z" fill="#939498" />
            <path d="M908.500 420.500H1507" stroke="#c3c4c7" />
            <path d="M850 831.500h598.500" stroke="#bfc0c2" />
            <g clipPath="url(#mainHole)">
                <rect x="1020" y="470" width="280" height="230" fill="url(#mainWall)" />
                <circle r="1" transform="matrix(120.900 0 -31.700 102.800 1199.600 668.800)" fill="#e8e9ed" />
            </g>
            <CounterBore id="bore1" x={936.6} y={474.7} />
            <CounterBore id="bore2" x={1445.4} y={474.7} />
            <CounterBore id="bore3" x={869.3} y={691.4} />
            <CounterBore id="bore4" x={1378.4} y={691.4} />
            <path d="M1178.500 626l-7-14" stroke="#4be04b" strokeWidth="1.400" />
            <path d="M1178.500 626l-6 18" stroke="#3fe6f5" strokeWidth="1.400" />
            <path d="M1178.500 626h21" stroke="#f28080" strokeWidth="1.600" />
            <path d="M1168 608h6v6h-6z" fill="#2dfa2d" />
            <path d="M1170 643h5v5h-5z" fill="#2df5fa" />
            <path d="M1199 624h5v4h-5z" fill="#f52d2d" />
            <path d="M1088.500 857.500v16l4-3.500 3 6h2.500l-2.500-6.500h4.500z" fill="#fff" stroke="#222" />
        </svg>
    );
}

function Viewport() {
    return (
        <main className="relative min-w-0 flex-1 bg-[#e8e9ed]">
            <Model />
            <div className="absolute inset-x-0 top-[7px] flex justify-center pl-[2px]">
                <div className="flex gap-1 border border-[#a9b8b8] bg-white p-1">
                    {viewTools.map((t) => (
                        <button
                            key={t.label}
                            type="button"
                            aria-label={t.label}
                            className={clsx("relative flex h-7 w-7 items-center justify-center", t.active && "bg-[#dfe0e1] outline outline-[#a9adae] -outline-offset-1")}
                        >
                            <Ico>{icons[t.icon]}</Ico>
                            {t.menu && (
                                <svg viewBox="0 0 4 4" width="4" height="4" className="absolute right-0 bottom-0" aria-hidden="true"><path d="M4 0v4H0z" fill="#555" /></svg>
                            )}
                        </button>
                    ))}
                </div>
            </div>
        </main>
    );
}

function StatusBar() {
    return (
        <footer className="flex h-[37px] shrink-0 items-center border-t border-[#adb8ba] bg-white pt-[3px] text-[14px] text-[#55585a]">
            <ToolButton icon="navToggle" label="Navigator" active className="ml-[7px] w-[26px]" />
            <button type="button" aria-label="Browser" className="ml-[7px]"><Ico>{icons.globe}</Ico></button>
            <button type="button" aria-label="Full Screen" className="ml-[10px]"><Ico>{icons.square}</Ico></button>
            <div className="ml-[13px] h-[30px] w-px bg-[#c9cccd]" />
            <div className="ml-auto flex items-center">
                <div className="h-[31px] w-px bg-[#c9cccd]" />
                <div className="ml-1 h-[31px] w-px bg-[#c9cccd]" />
                <button type="button" aria-label="Find" className="ml-[2px] flex h-[30px] w-[34px] items-center justify-center border border-[#bfc2c3] bg-[#fafafa]">
                    <Ico>{icons.binoculars}</Ico>
                </button>
                <button type="button" aria-label="Find options" className="flex h-[30px] w-[17px] items-center justify-center border border-l-0 border-[#bfc2c3] bg-[#fafafa]">
                    <Caret />
                </button>
                <div className="ml-[2px] h-[31px] w-px bg-[#c9cccd]" />
            </div>
            <div className="relative mr-[21px] ml-[119px] h-7 w-[217px]">
                <select aria-label="Selection filter" className="h-full w-full appearance-none border border-[#a5a9aa] bg-[#f7f7f7] pl-2 outline-none">
                    <option>Geometry</option>
                </select>
                <span className="pointer-events-none absolute inset-y-px right-px flex w-[19px] items-center justify-center border-l border-[#a5a9aa]">
                    <Caret />
                </span>
            </div>
        </footer>
    );
}

export default function App() {
    return (
        <div className="flex h-screen flex-col overflow-hidden border-t-4 border-black bg-white font-['Noto_Sans','Open_Sans',sans-serif]">
            <Paints />
            <TitleBar />
            <TabBar />
            <Ribbon />
            <div className="flex min-h-0 flex-1">
                <SidePanel />
                <Viewport />
            </div>
            <StatusBar />
        </div>
    );
}
